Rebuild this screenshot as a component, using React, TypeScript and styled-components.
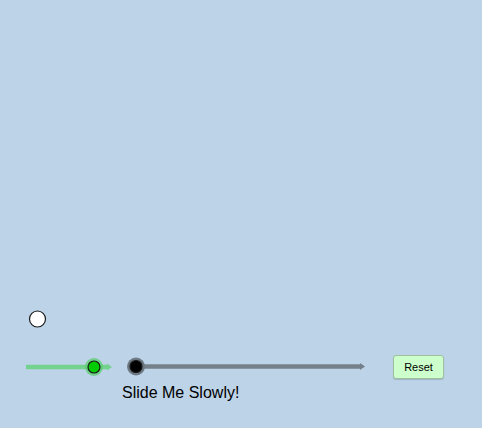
import styled, { createGlobalStyle } from "styled-components";

const GlobalStyle = createGlobalStyle`
  html, body {
    margin: 0;
    padding: 0;
    background: #bdd3e7;
  }
`;

const Applet = styled.div`
  position: relative;
  width: 482px;
  height: 428px;
  overflow: hidden;
  background: #bdd3e7;
  font-family: "Liberation Sans", Arial, sans-serif;
`;

const Graphics = styled.svg`
  position: absolute;
  left: 0;
  top: 0;
`;

const Caption = styled.div`
  position: absolute;
  left: 122px;
  top: 383px;
  font-size: 16px;
  line-height: 20px;
  color: #000;
  white-space: nowrap;
`;

const ResetButton = styled.button`
  position: absolute;
  left: 393px;
  top: 355px;
  width: 51px;
  height: 24px;
  padding: 0;
  font-family: inherit;
  font-size: 11px;
  color: #000;
  background: #ccffcc;
  border: 1px solid #9fbf9f;
  border-radius: 3px;
  box-shadow: 0 1px 1px rgba(0, 0, 0, 0.15);
  cursor: pointer;
`;

type SliderProps = {
  x1: number;
  x2: number;
  y: number;
  knob: number;
  line: string;
  halo: string;
  fill: string;
};

const Slider = ({ x1, x2, y, knob, line, halo, fill }: SliderProps) => (
  <g>
    <line x1={x1} y1={y} x2={x2 - 4} y2={y} stroke={line} strokeWidth={4.5} />
    <polygon points={`${x2},${y} ${x2 - 5},${y - 3.5} ${x2 - 5},${y + 3.5}`} fill={line} />
    <circle cx={knob} cy={y} r={9} fill={halo} />
    <circle cx={knob} cy={y} r={6} fill={fill} stroke="#1a1a1a" strokeWidth={1.2} />
  </g>
);

export default function App() {
  return (
    <>
      <GlobalStyle />
      <Applet>
        <Graphics width={482} height={428} viewBox="0 0 482 428">
          <circle cx={37.5} cy={319} r={8} fill="#ffffff" stroke="#1a1a1a" strokeWidth={1.2} />
          <Slider x1={26} x2={112} y={367} knob={94} line="#73d38e" halo="rgba(90, 205, 110, 0.75)" fill="#00cc00" />
          <Slider x1={136} x2={365} y={366.5} knob={136} line="#75808a" halo="#6c7782" fill="#000000" />
        </Graphics>
        <Caption>Slide Me Slowly!</Caption>
        <ResetButton>Reset</ResetButton>
      </Applet>
    </>
  );
}
